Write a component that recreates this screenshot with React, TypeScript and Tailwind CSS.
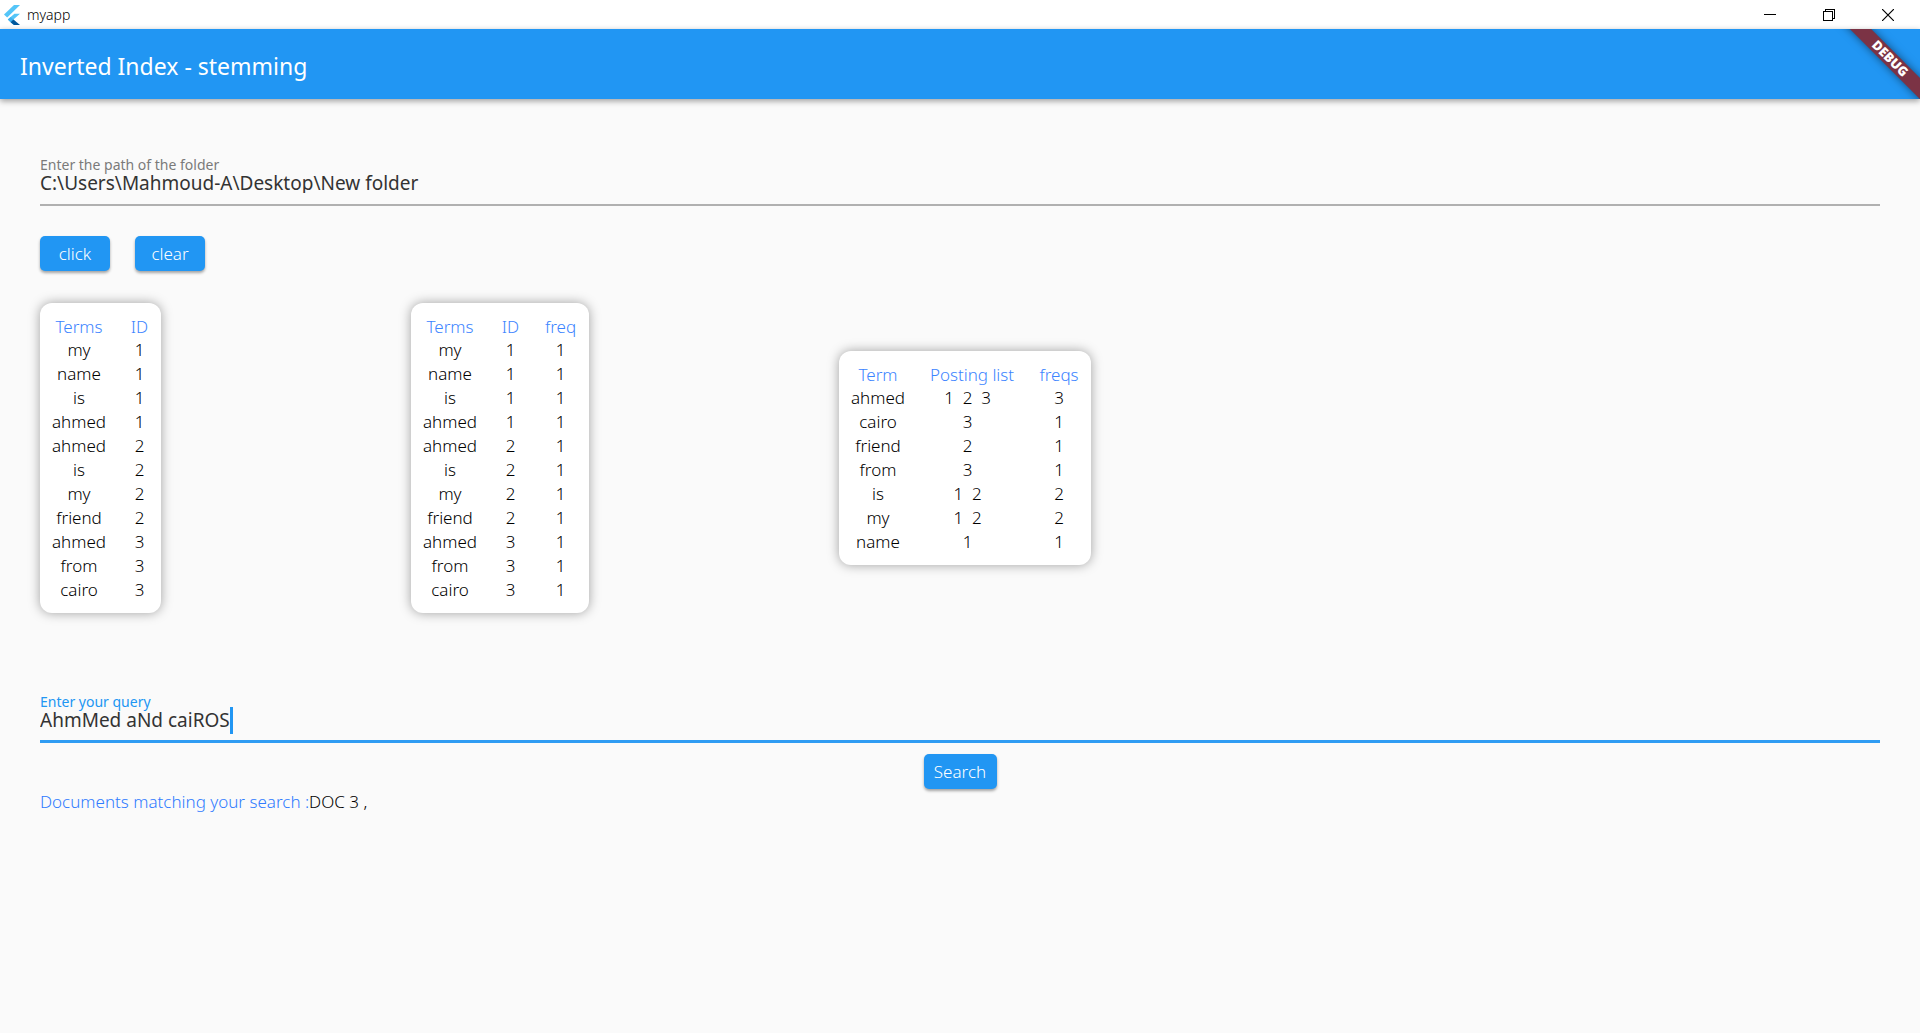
import { useState } from "react";

type Cell = string | number;

const postings: Cell[][] = [
  ["my", 1],
  ["name", 1],
  ["is", 1],
  ["ahmed", 1],
  ["ahmed", 2],
  ["is", 2],
  ["my", 2],
  ["friend", 2],
  ["ahmed", 3],
  ["from", 3],
  ["cairo", 3],
];

const frequencies: Cell[][] = postings.map((row) => [...row, 1]);

const invertedIndex: Cell[][] = [
  ["ahmed", "1  2  3  ", 3],
  ["cairo", "3  ", 1],
  ["friend", "2  ", 1],
  ["from", "3  ", 1],
  ["is", "1  2  ", 2],
  ["my", "1  2  ", 2],
  ["name", "1  ", 1],
];

function FlutterLogo() {
  return (
    <svg viewBox="0 0 16 20" className="h-5 w-4" aria-hidden="true">
      <path d="M10 0H16L3.2 12.4L0 9.6Z" fill="#54c5f8" />
      <path d="M10.4 8.8H16L9.4 14.4L12.4 17.4L9.6 20L3.8 14.6Z" fill="#54c5f8" />
      <path d="M6.6 11.9L9.4 14.4L6.6 17.2L3.8 14.6Z" fill="#3fb0ee" />
      <path d="M9.4 14.4L16 20H10L6.6 17.2Z" fill="#01579b" />
    </svg>
  );
}

function TitleBar() {
  return (
    <div className="flex h-[29px] items-center justify-between bg-white text-black">
      <div className="flex items-center gap-[7px] pl-1">
        <FlutterLogo />
        <span className="text-sm font-[350]">myapp</span>
      </div>
      <div className="flex h-full pr-[3px]">
        <button aria-label="Minimize" className="flex w-[59px] items-center justify-center">
          <svg width="12" height="12" viewBox="0 0 12 12" shapeRendering="crispEdges">
            <path d="M0 5.5H12" stroke="currentColor" />
          </svg>
        </button>
        <button aria-label="Restore" className="flex w-[59px] items-center justify-center">
          <svg width="12" height="12" viewBox="0 0 12 12" fill="none" stroke="currentColor" shapeRendering="crispEdges">
            <path d="M0.5 2.5H9.5V11.5H0.5ZM2.5 2.5V0.5H11.5V9.5H9.5" />
          </svg>
        </button>
        <button aria-label="Close" className="flex w-[59px] items-center justify-center">
          <svg width="12" height="12" viewBox="0 0 12 12" stroke="currentColor">
            <path d="M0 0L12 12M12 0L0 12" strokeWidth="1.2" />
          </svg>
        </button>
      </div>
    </div>
  );
}

function DebugBanner() {
  return (
    <div className="pointer-events-none absolute top-0 right-0 h-full w-24 overflow-hidden">
      <div className="absolute top-[22px] -right-10 flex h-[15px] w-[140px] rotate-45 items-center justify-center bg-[#7b3345] text-[13px] font-black text-white shadow-[0_0_9px_rgba(0,0,0,0.5)]">
        DEBUG
      </div>
    </div>
  );
}

function AppBar() {
  return (
    <header className="relative flex h-[70px] items-center bg-[#2196f3] px-5 pt-1 shadow-[0_2px_6px_rgba(0,0,0,0.38)]">
      <h1 className="text-[23px] text-white">Inverted Index - stemming</h1>
      <DebugBanner />
    </header>
  );
}

function RaisedButton({ children, wide }: { children: string; wide?: boolean }) {
  return (
    <button
      className={
        "h-[35px] rounded-[5px] bg-[#2196f3] text-[17px] font-[350] text-white shadow-[0_2px_3px_rgba(0,0,0,0.35)] " +
        (wide ? "w-[73px]" : "w-[70px]")
      }
    >
      {children}
    </button>
  );
}

function IndexTable({ headings, widths, rows }: { headings: string[]; widths: string[]; rows: Cell[][] }) {
  return (
    <div className="rounded-xl bg-white pt-[13px] pb-[11px] shadow-[0_0_12px_rgba(0,0,0,0.36)]">
      <table className="table-fixed text-center text-[17px] leading-6 font-light whitespace-pre text-black">
        <thead>
          <tr>
            {headings.map((heading, i) => (
              <th key={heading} className={"p-0 leading-[22px] font-[350] text-[#3c84ff] " + widths[i]}>
                {heading}
              </th>
            ))}
          </tr>
        </thead>
        <tbody>
          {rows.map((row, r) => (
            <tr key={r}>
              {row.map((cell, c) => (
                <td key={c} className="p-0">
                  {cell}
                </td>
              ))}
            </tr>
          ))}
        </tbody>
      </table>
    </div>
  );
}

export default function App() {
  const [path, setPath] = useState("C:\\Users\\Mahmoud-A\\Desktop\\New folder");
  const [query, setQuery] = useState("AhmMed aNd caiROS");

  return (
    <div className="flex min-h-screen flex-col bg-[#fafafa] font-['Noto_Sans',sans-serif] text-[#1f1f1f]">
      <TitleBar />
      <AppBar />
      <main className="flex flex-col px-10 pt-[57px]">
        <div className="flex h-[50px] flex-col border-b-2 border-[#b0b0b0] pt-px">
          <label htmlFor="path" className="text-sm leading-4 text-[#7a7a7a]">
            Enter the path of the folder
          </label>
          <input
            id="path"
            value={path}
            onChange={(e) => setPath(e.target.value)}
            className="h-5 w-full text-[19px] leading-5 text-[#333333] outline-none"
          />
        </div>

        <div className="mt-[30px] flex gap-[25px]">
          <RaisedButton>click</RaisedButton>
          <RaisedButton>clear</RaisedButton>
        </div>

        <div className="mt-8 flex items-center gap-[250px]">
          <IndexTable headings={["Terms", "ID"]} widths={["w-[78px]", "w-[43px]"]} rows={postings} />
          <IndexTable
            headings={["Terms", "ID", "freq"]}
            widths={["w-[78px]", "w-[43px]", "w-[57px]"]}
            rows={frequencies}
          />
          <IndexTable
            headings={["Term", "Posting list", "freqs"]}
            widths={["w-[78px]", "w-[110px]", "w-[64px]"]}
            rows={invertedIndex}
          />
        </div>

        <div className="mt-20 flex h-[50px] flex-col border-b-3 border-[#2f9cf3] pt-px">
          <label htmlFor="query" className="text-sm leading-4 text-[#2196f3]">
            Enter your query
          </label>
          <div className="flex h-5 items-center">
            <input
              id="query"
              value={query}
              onChange={(e) => setQuery(e.target.value)}
              className="field-sizing-content h-5 text-[19px] leading-5 text-[#333333] outline-none"
            />
            <span className="h-[27px] w-[3px] shrink-0 bg-[#2196f3]" />
          </div>
        </div>

        <div className="mt-[11px] flex justify-center">
          <RaisedButton wide>Search</RaisedButton>
        </div>
        <p className="text-[17px] leading-[26px] font-light text-black">
          <span className="text-[#2f7bff]">Documents matching your search :</span>DOC 3 ,
        </p>
      </main>
    </div>
  );
}
